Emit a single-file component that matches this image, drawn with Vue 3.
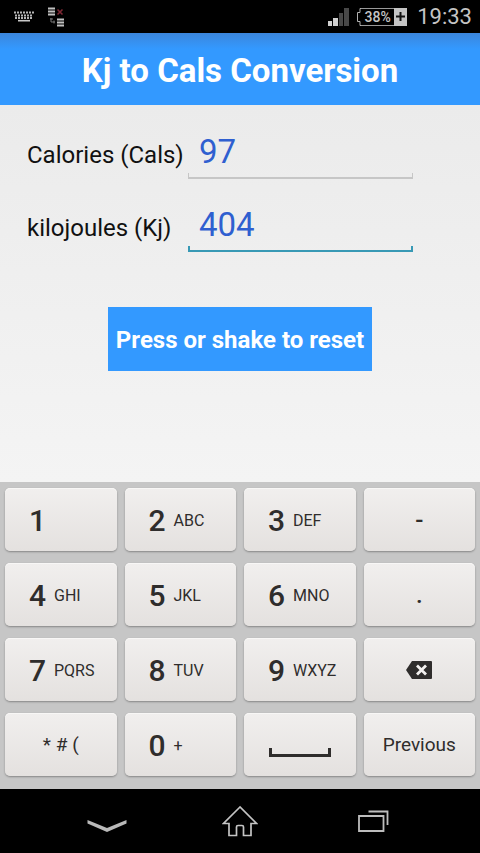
<script setup>
import { ref, computed } from "vue";

const KJ_PER_CAL = 4.184;

const cals = ref("97");
const kj = ref("404");
const active = ref("kj");

const keys = [
  { main: "1", sub: "" },
  { main: "2", sub: "ABC" },
  { main: "3", sub: "DEF" },
  { text: "-", value: "-", strong: true },
  { main: "4", sub: "GHI" },
  { main: "5", sub: "JKL" },
  { main: "6", sub: "MNO" },
  { text: ".", value: ".", strong: true },
  { main: "7", sub: "PQRS" },
  { main: "8", sub: "TUV" },
  { main: "9", sub: "WXYZ" },
  { icon: "delete", label: "Delete" },
  { text: "* # (" },
  { main: "0", sub: "+" },
  { icon: "space", label: "Space" },
  { text: "Previous", action: "previous" },
];

const current = computed(() => (active.value === "kj" ? kj : cals));

function convert() {
  const n = parseFloat(current.value.value);
  const other = active.value === "kj" ? cals : kj;
  if (isNaN(n)) {
    other.value = "";
    return;
  }
  const result = active.value === "kj" ? n / KJ_PER_CAL : n * KJ_PER_CAL;
  other.value = String(Math.round(result));
}

function press(key) {
  if (key.icon === "delete") {
    current.value.value = current.value.value.slice(0, -1);
  } else if (key.action === "previous") {
    active.value = "cals";
    return;
  } else if (key.main || key.value) {
    current.value.value += key.main || key.value;
  } else {
    return;
  }
  convert();
}

function reset() {
  cals.value = "";
  kj.value = "";
}
</script>

<template>
  <div class="screen">
    <div class="statusbar">
      <svg class="keyboardIcon" width="20" height="11" viewBox="0 0 20 11">
        <path d="M0 1.5h20M1 4.5h18M1 7h18" stroke="#b5b5b5" stroke-width="2" stroke-dasharray="2 1" />
        <path d="M4 9.7h12" stroke="#c8c8c8" stroke-width="1.6" />
      </svg>
      <svg width="18" height="20" viewBox="0 0 18 20">
        <path d="M0 1.5h7M0 4.5h7M0 7.5h7M9 12.5h7M9 15.5h7M9 18.5h7" stroke="#c0c0c0" stroke-width="2" />
        <path d="M9.5 2.5l5 5M14.5 2.5l-5 5" stroke="#7d2733" stroke-width="1.6" />
        <path d="M3 11v4h4M2 12h3M6 13.5v3" fill="none" stroke="#777" stroke-width="1" />
      </svg>
      <div class="spacer"></div>
      <svg width="21" height="18" viewBox="0 0 21 18">
        <path d="M0 13h4v5H0zM5 10h5v8H5z" fill="#d0d0d0" />
        <path d="M11 5h4v13h-4zM16 0h5v18h-5z" fill="#484848" />
      </svg>
      <div class="battery">
        <svg width="4" height="18" viewBox="0 0 4 18">
          <path d="M4 .5H3V4.5H.5v9H3v4h1" fill="none" stroke="#b0b0b0" />
        </svg>
        <span class="percent">38%</span>
        <span class="plus">
          <svg width="9" height="9" viewBox="0 0 9 9">
            <path d="M4.5 0v9M0 4.5h9" stroke="#111" stroke-width="2" />
          </svg>
        </span>
      </div>
      <span class="clock">19:33</span>
    </div>

    <header class="titlebar">
      <h1>Kj to Cals Conversion</h1>
    </header>

    <main class="content">
      <div class="field">
        <label for="cals">Calories (Cals)</label>
        <div class="box" :class="{ active: active === 'cals' }">
          <input id="cals" v-model="cals" type="text" inputmode="none" @focus="active = 'cals'" @input="convert" />
        </div>
      </div>
      <div class="field">
        <label for="kj">kilojoules (Kj)</label>
        <div class="box" :class="{ active: active === 'kj' }">
          <input id="kj" v-model="kj" type="text" inputmode="none" @focus="active = 'kj'" @input="convert" />
        </div>
      </div>
      <button class="reset" type="button" @click="reset">Press or shake to reset</button>
    </main>

    <div class="keyboard">
      <button
        v-for="(key, i) in keys"
        :key="i"
        type="button"
        class="key"
        :class="{ number: key.main }"
        :aria-label="key.label"
        @click="press(key)"
      >
        <template v-if="key.main">
          <span class="digit">{{ key.main }}</span>
          <span class="letters">{{ key.sub }}</span>
        </template>
        <svg v-else-if="key.icon === 'delete'" width="26" height="18" viewBox="0 0 26 18">
          <path d="M6 0h19q1 0 1 1v16q0 1-1 1H6L0 9z" fill="#2f2d2c" />
          <path d="M11 4.5l9 9M20 4.5l-9 9" stroke="#f3f1ef" stroke-width="2.8" />
        </svg>
        <svg v-else-if="key.icon === 'space'" class="space" width="62" height="9" viewBox="0 0 62 9">
          <path d="M1.5 0v7.500h59V0" fill="none" stroke="#2f2d2c" stroke-width="3" />
        </svg>
        <span v-else class="text" :class="{ strong: key.strong }">{{ key.text }}</span>
      </button>
    </div>

    <nav class="navbar">
      <button type="button" aria-label="Hide keyboard">
        <svg class="chevron" width="40" height="12" viewBox="0 0 40 12">
          <path d="M.5 0L20 8 39.500 0v3.500L20 12 .5 3.500z" fill="#b9b9b9" />
        </svg>
      </button>
      <button type="button" aria-label="Home">
        <svg width="36" height="32" viewBox="0 0 36 32">
          <path
            d="M18 2L1.5 18.500H7V30.500h7.500V22q0-1.500 1.500-1.500h4q1.500 0 1.500 1.500v8.500H29V18.500h5.500z"
            fill="none"
            stroke="#c4c4c4"
            stroke-width="1.700"
          />
        </svg>
      </button>
      <button type="button" aria-label="Recent apps">
        <svg width="31" height="22" viewBox="0 0 31 22">
          <path d="M1 6h24.500v15H1zM10.500 1.500h19V15" fill="none" stroke="#bdbdbd" stroke-width="1.800" />
        </svg>
      </button>
    </nav>
  </div>
</template>

<style>
body {
  margin: 0;
  background: #000;
}
</style>

<style scoped>
.screen {
  display: flex;
  flex-direction: column;
  min-height: 100vh;
  font-family: Roboto, "Noto Sans", sans-serif;
  background: #000;
}
button {
  border: 0;
  padding: 0;
  font-family: inherit;
  cursor: pointer;
}
svg {
  display: block;
}

.statusbar {
  display: flex;
  align-items: center;
  height: 33px;
  padding: 0 8px 0 14px;
  color: #c4c4c4;
}
.keyboardIcon {
  margin-right: 14px;
}
.spacer {
  flex: 1;
}
.battery {
  display: flex;
  height: 18px;
  margin: 0 10px 0 8px;
}
.percent {
  box-sizing: border-box;
  width: 33px;
  border: 1px solid #999;
  border-width: 1px 0;
  font-size: 14px;
  font-weight: 500;
  line-height: 16px;
  text-align: center;
}
.plus {
  display: flex;
  align-items: center;
  justify-content: center;
  width: 13px;
  background: #c4c4c4;
}
.clock {
  font-size: 22px;
  line-height: 33px;
}

.titlebar {
  height: 72px;
  background: linear-gradient(#3b86dc, #3399ff 16px);
}
h1 {
  margin: 0;
  color: #fff;
  font-size: 33px;
  font-weight: 700;
  line-height: 75px;
  text-align: center;
}

.content {
  display: flex;
  flex: 1;
  flex-direction: column;
  padding: 21px 67px 0 27px;
  background: linear-gradient(#ebebeb, #f4f4f4);
}
.field {
  display: flex;
  height: 53px;
  margin-bottom: 20px;
}
label {
  width: 161px;
  color: #111;
  font-size: 24px;
  line-height: 59px;
  white-space: nowrap;
}
.box {
  flex: 1;
  min-width: 0;
  background:
    linear-gradient(#c6c6c6, #c6c6c6) 0 100% / 1px 6px no-repeat,
    linear-gradient(#c6c6c6, #c6c6c6) 100% 100% / 1px 6px no-repeat,
    linear-gradient(#c6c6c6, #c6c6c6) 0 100% / 100% 2px no-repeat;
}
.box.active {
  background:
    linear-gradient(#3899b5, #3899b5) 0 100% / 2px 6px no-repeat,
    linear-gradient(#3899b5, #3899b5) 100% 100% / 2px 6px no-repeat,
    linear-gradient(#3899b5, #3899b5) 0 100% / 100% 2px no-repeat;
}
input {
  box-sizing: border-box;
  width: 100%;
  height: 51px;
  border: 0;
  padding: 0 11px;
  outline: none;
  background: none;
  color: #2f5fd0;
  font-family: inherit;
  font-size: 33px;
}
.reset {
  align-self: center;
  height: 64px;
  margin: 35px -40px 0 0;
  padding: 2px 8px 0;
  background: #3399ff;
  color: #fff;
  font-size: 24px;
  font-weight: 700;
  white-space: nowrap;
}

.keyboard {
  display: grid;
  grid-template-columns: repeat(4, 1fr);
  gap: 12px 8px;
  padding: 6px 5px 13px;
  background: #c6c6c6;
}
.key {
  display: flex;
  align-items: center;
  justify-content: center;
  height: 63px;
  border-radius: 5px;
  background: linear-gradient(#f1efee, #e4e1df);
  box-shadow: 0 1px 2px #858585, inset 0 1px 0 #f8f7f6;
  color: #2f2d2c;
}
.number {
  justify-content: flex-start;
  padding: 2px 0 0 24px;
}
.digit {
  width: 25px;
  font-size: 30px;
  font-weight: 500;
  text-align: left;
}
.letters {
  font-size: 16px;
}
.text {
  font-size: 19px;
}
.strong {
  font-size: 24px;
  font-weight: 500;
}
.space {
  margin-top: 15px;
}

.navbar {
  display: flex;
  align-items: center;
  justify-content: center;
  height: 64px;
}
.navbar button {
  display: flex;
  align-items: center;
  justify-content: center;
  width: 133px;
  height: 64px;
  background: none;
}
.chevron {
  margin-top: 9px;
}
</style>
